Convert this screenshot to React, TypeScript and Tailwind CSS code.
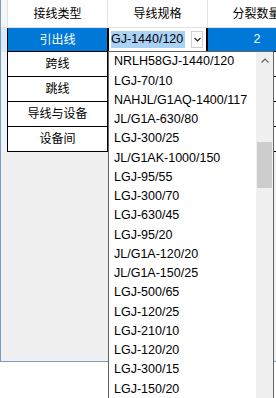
import React from "react";

const options = [
  "NRLH58GJ-1440/120",
  "LGJ-70/10",
  "NAHJL/G1AQ-1400/117",
  "JL/G1A-630/80",
  "LGJ-300/25",
  "JL/G1AK-1000/150",
  "LGJ-95/55",
  "LGJ-300/70",
  "LGJ-630/45",
  "LGJ-95/20",
  "JL/G1A-120/20",
  "JL/G1A-150/25",
  "LGJ-500/65",
  "LGJ-120/25",
  "LGJ-210/10",
  "LGJ-120/20",
  "LGJ-300/15",
  "LGJ-150/20",
];

const rows = ["跨线", "跳线", "导线与设备", "设备间"];

const font = {
  fontFamily: '"Liberation Sans", "Noto Sans CJK SC", sans-serif',
};

export default function App() {
  return (
    <div
      className="relative w-[276px] h-[398px] overflow-hidden bg-white text-[12px] text-black"
      style={font}
    >
      {/* Grid */}
      <div className="w-[320px] h-[362px] border-l border-b border-[#7b9bc2] bg-[#f0f0f0]">
        {/* Header */}
        <div className="flex h-[28px] bg-white border-b border-[#e3e3e3]">
          <div className="w-[7px] border-r border-[#e3e3e3] bg-[#f5f5f5]" />
          <div className="w-[100px] border-r border-[#e3e3e3] flex items-center justify-center">接线类型</div>
          <div className="w-[100px] border-r border-[#e3e3e3] flex items-center justify-center">导线规格</div>
          <div className="w-[98px] border-r border-[#e3e3e3] flex items-center justify-center">分裂数量</div>
        </div>

        {/* Current row */}
        <div className="flex h-[24px]">
          <div className="w-[7px] border-r border-black bg-[#d9eaf8]" />
          <div className="w-[100px] border-r border-b border-black bg-[#0078d7] text-white flex items-center justify-center">
            引出线
          </div>
          <div className="w-[100px] flex bg-white border-l border-r-2 border-b border-black">
            <div className="flex-1 flex items-center pl-[2px] overflow-hidden">
              <span className="bg-[#a9d2f5] leading-[17px] whitespace-nowrap text-[12.5px] pr-[2px]">GJ-1440/120</span>
            </div>
            <div className="w-[12px] my-[3px] mr-[3px] border border-[#d0d0d0] bg-white flex items-center justify-center">
              <svg width="7" height="5" viewBox="0 0 7 5">
                <path d="M0.5 1 L3.5 4 L6.5 1" fill="none" stroke="#222" strokeWidth="1.2" />
              </svg>
            </div>
          </div>
          <div className="w-[98px] border-b border-black bg-[#0078d7] text-white text-[12.5px] flex items-center justify-center">2</div>
        </div>

        {rows.map((r) => (
          <div key={r} className="flex h-[25px]">
            <div className="w-[7px] border-r border-black bg-[#eef4fa]" />
            <div className="w-[100px] border-r border-b border-black bg-white flex items-center justify-center">{r}</div>
            <div className="w-[100px] border-r border-b border-black bg-white" />
            <div className="w-[98px] border-b border-black bg-white" />
          </div>
        ))}
      </div>

      {/* Dropdown list */}
      <div className="absolute left-[108px] top-[51px] w-[166px] h-[360px] border border-[#646464] bg-white text-[12.5px]">
        <div className="pr-[17px]">
          {options.map((o) => (
            <div key={o} className="h-[19.25px] pl-[5px] flex items-center whitespace-nowrap">
              {o}
            </div>
          ))}
        </div>
        <div className="absolute right-0 top-0 bottom-0 w-[17px] bg-[#f0f0f0]">
          <div className="h-[17px] flex items-center justify-center">
            <svg width="8" height="5" viewBox="0 0 8 5">
              <path d="M0.5 4.5 L4 1 L7.5 4.5" fill="none" stroke="#606060" strokeWidth="1.1" />
            </svg>
          </div>
          <div className="absolute left-[1px] right-[1px] top-[90px] h-[46px] bg-[#cdcdcd]" />
        </div>
      </div>
    </div>
  );
}
